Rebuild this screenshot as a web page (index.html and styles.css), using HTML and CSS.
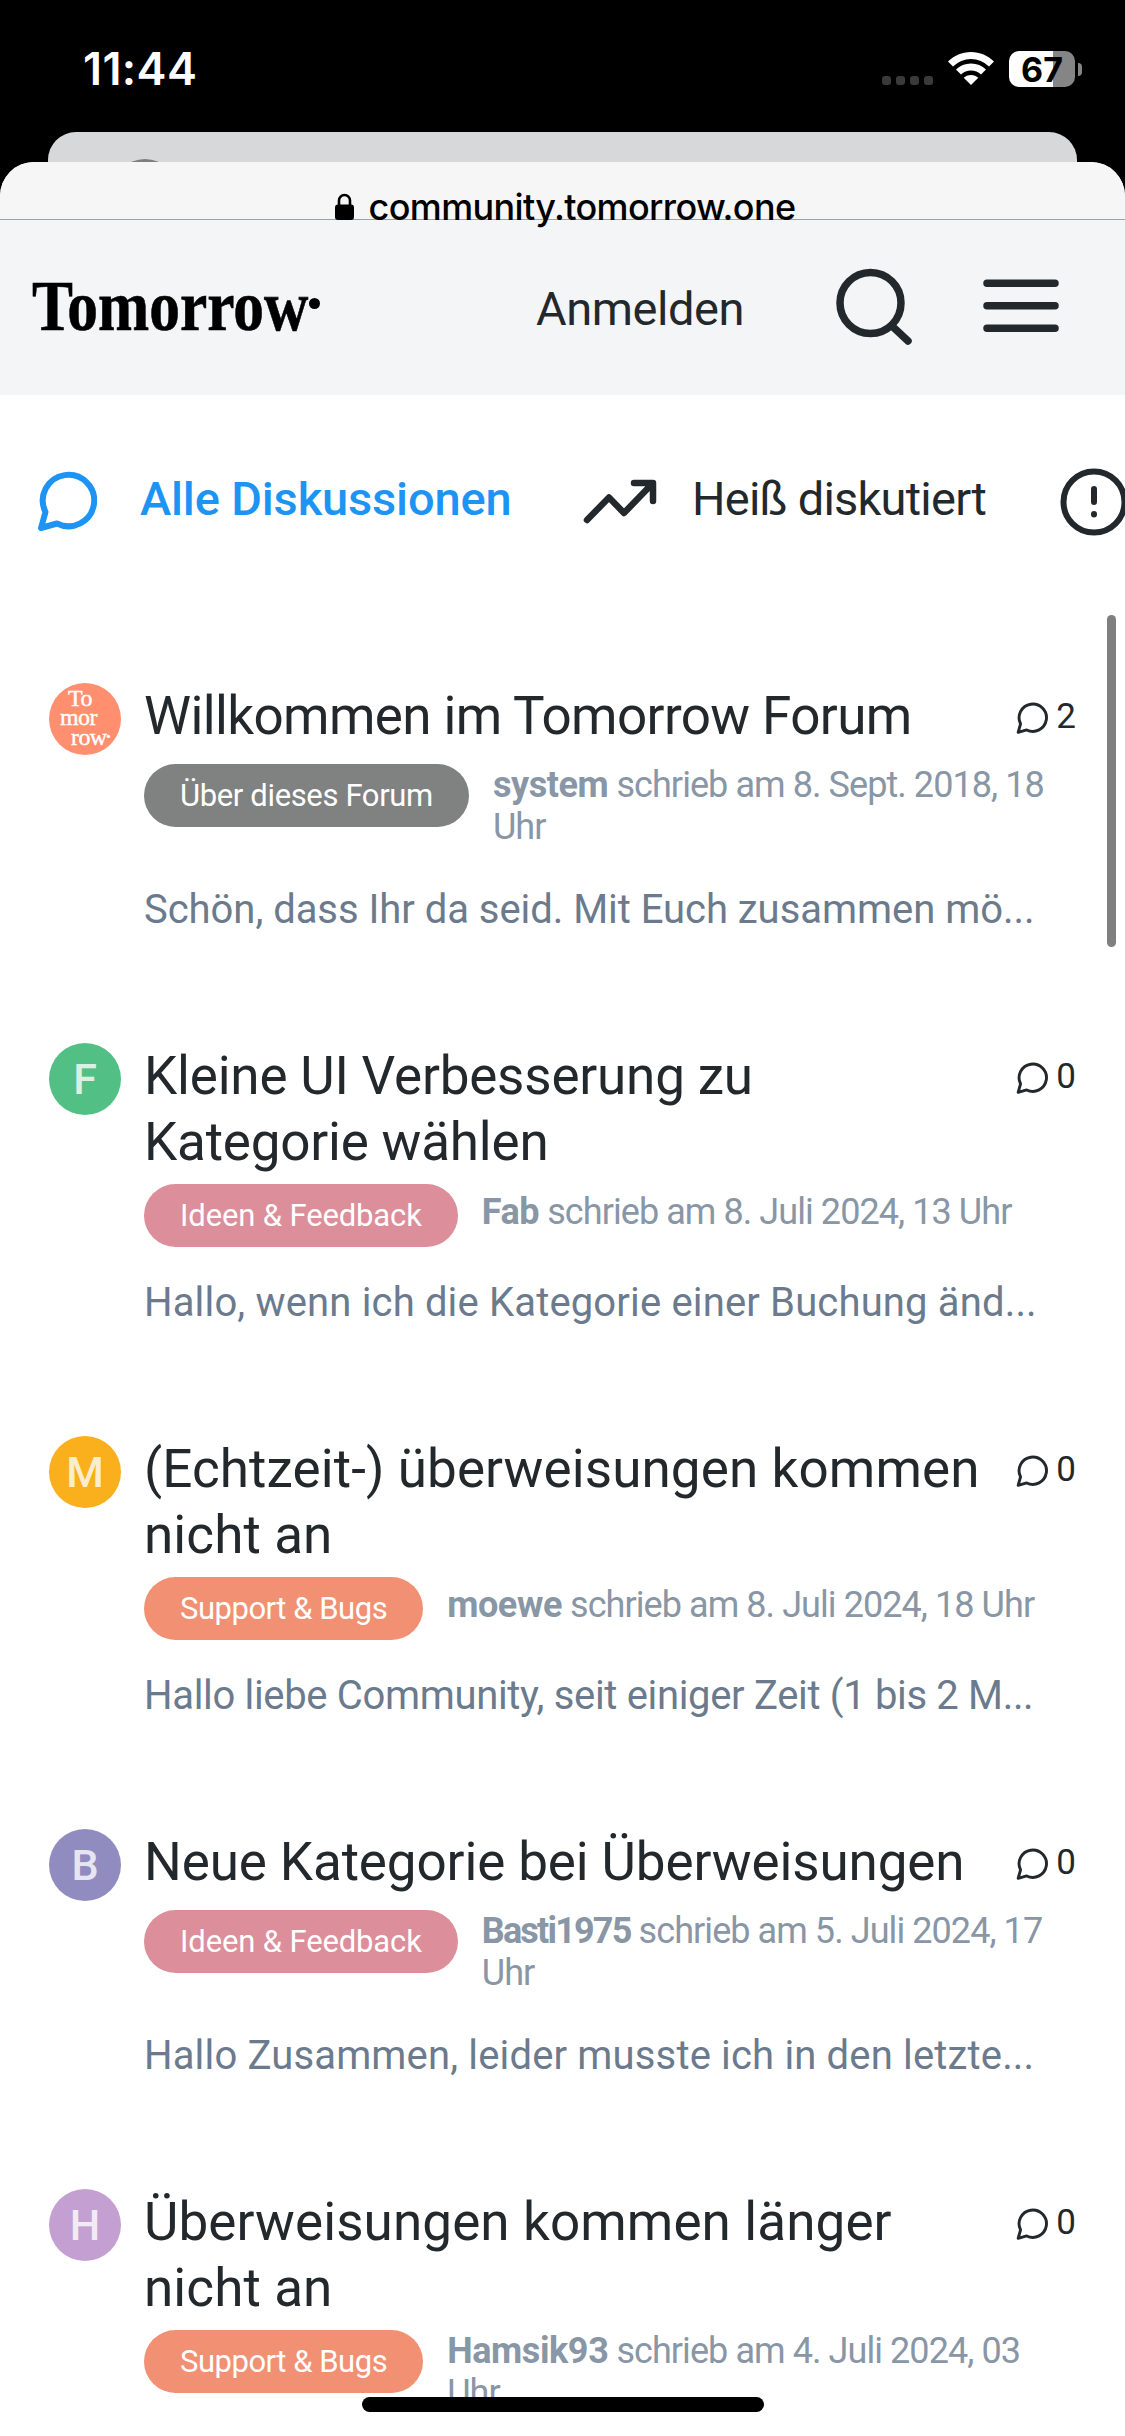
FILE: index.html
```html
<!DOCTYPE html>
<html lang="de">
<head>
<meta charset="utf-8">
<title>Tomorrow Community</title>
<link rel="stylesheet" href="styles.css">
</head>
<body>
<svg class="defs" aria-hidden="true">
  <symbol id="bubble" viewBox="0 0 60 62">
    <path d="M8.5 41A25.7 25.7 0 1 1 20 52.5L4 57Z"/>
  </symbol>
</svg>
<div class="screen">
  <div class="statusbar">
    <span class="clock">11:44</span>
    <div class="status-icons">
      <div class="dots"><i></i><i></i><i></i><i></i></div>
      <svg class="wifi" viewBox="0 0 46 33"><path d="M23 0C14 0 6 3.6 0 9.5L5 14.500A25.500 25.500 0 0 1 41 14.500L46 9.500C40 3.600 32 0 23 0Z"/><path d="M23 11.500C17 11.500 12 13.800 8 17.600L13 22.600A14.300 14.300 0 0 1 33 22.600L38 17.600C34 13.800 29 11.500 23 11.500Z"/><path d="M23 23C20 23 17.500 24.100 15.700 25.800L23 33L30.300 25.800C28.500 24.100 26 23 23 23Z"/></svg>
      <div class="battery">67</div>
      <i class="battery-cap"></i>
    </div>
  </div>
  <div class="back-sheet"><i></i></div>
  <main class="sheet">
    <div class="address">
      <svg class="lock" viewBox="0 0 19 27"><path d="M4 13V7.500a5.500 5.500 0 0 1 11 0V13" fill="none" stroke="#000" stroke-width="2.600"/><rect y="11.500" width="19" height="15.500" rx="3"/></svg>
      <span>community.tomorrow.one</span>
    </div>
    <header class="header">
      <div class="logo"><span>Tomorrow</span><i></i></div>
      <a class="login">Anmelden</a>
      <svg class="search" viewBox="0 0 78 78"><circle cx="35.500" cy="36" r="30.500"/><path d="M57 59L73 74"/></svg>
      <svg class="burger" viewBox="0 0 76 54"><path d="M4 4.300H72M4 26.800H72M4 49.300H72"/></svg>
    </header>
    <nav class="tabs">
      <svg class="tab-bubble"><use href="#bubble"/></svg>
      <span class="tab-active">Alle Diskussionen</span>
      <svg class="trend" viewBox="0 0 74 46"><path d="M4 41L26 18.500L41 34L69 5M51 4H70V22"/></svg>
      <span class="tab">Heiß diskutiert</span>
      <svg class="alert" viewBox="0 0 68 68"><circle cx="34" cy="34" r="30.500"/><path d="M34 21V34M34 46V46.500"/></svg>
    </nav>
    <section class="topics">
      <article class="topic long">
        <div class="avatar brand"><span>To</span><span>mor</span><span>row<b>•</b></span></div>
        <div class="body">
          <div class="top"><h2 class="tight">Willkommen im Tomorrow Forum</h2><div class="count"><svg><use href="#bubble"/></svg>2</div></div>
          <div class="info"><span class="badge about">Über dieses Forum</span><p class="meta"><b>system</b> schrieb am 8. Sept. 2018, 18 Uhr</p></div>
          <p class="excerpt">Schön, dass Ihr da seid. Mit Euch zusammen mö...</p>
        </div>
      </article>
      <article class="topic">
        <div class="avatar green">F</div>
        <div class="body">
          <div class="top"><h2>Kleine UI Verbesserung zu Kategorie wählen</h2><div class="count"><svg><use href="#bubble"/></svg>0</div></div>
          <div class="info"><span class="badge ideas">Ideen &amp; Feedback</span><p class="meta"><b>Fab</b> schrieb am 8. Juli 2024, 13 Uhr</p></div>
          <p class="excerpt loose">Hallo, wenn ich die Kategorie einer Buchung änd...</p>
        </div>
      </article>
      <article class="topic">
        <div class="avatar yellow">M</div>
        <div class="body">
          <div class="top"><h2 class="loose">(Echtzeit-) überweisungen kommen nicht an</h2><div class="count"><svg><use href="#bubble"/></svg>0</div></div>
          <div class="info"><span class="badge support">Support &amp; Bugs</span><p class="meta"><b>moewe</b> schrieb am 8. Juli 2024, 18 Uhr</p></div>
          <p class="excerpt tight">Hallo liebe Community, seit einiger Zeit (1 bis 2 M...</p>
        </div>
      </article>
      <article class="topic long">
        <div class="avatar indigo">B</div>
        <div class="body">
          <div class="top"><h2 class="medium">Neue Kategorie bei Überweisungen</h2><div class="count"><svg><use href="#bubble"/></svg>0</div></div>
          <div class="info"><span class="badge ideas">Ideen &amp; Feedback</span><p class="meta"><b class="narrow">Basti1975</b> schrieb am 5. Juli 2024, 17 Uhr</p></div>
          <p class="excerpt loose">Hallo Zusammen, leider musste ich in den letzte...</p>
        </div>
      </article>
      <article class="topic long wrapped">
        <div class="avatar lilac">H</div>
        <div class="body">
          <div class="top"><h2 class="loose">Überweisungen kommen länger nicht an</h2><div class="count"><svg><use href="#bubble"/></svg>0</div></div>
          <div class="info"><span class="badge support">Support &amp; Bugs</span><p class="meta"><b>Hamsik93</b> schrieb am 4. Juli 2024, 03 Uhr</p></div>
        </div>
      </article>
    </section>
  </main>
  <i class="scrollbar"></i>
  <div class="home-area"><i></i></div>
</div>
</body>
</html>
```
FILE: styles.css
```css
* { box-sizing: border-box; }
body { margin: 0; background: #000; }
h2, p { margin: 0; font-weight: 400; }
i { display: block; }
.defs { display: none; }
.screen {
  position: relative;
  width: 1125px;
  height: 2436px;
  overflow: hidden;
  background: #000;
  color: #23282c;
  font-family: Roboto, sans-serif;
}

/* Status bar */
.statusbar {
  height: 132px;
  padding: 0 43px 0 83px;
  display: flex;
  justify-content: space-between;
  align-items: flex-start;
  color: #fff;
  font-family: Inter, sans-serif;
}
.clock { margin-top: 39px; font-size: 45px; line-height: 60px; font-weight: 600; letter-spacing: .4px; }
.status-icons { display: flex; margin-top: 51px; }
.dots { display: flex; gap: 5px; margin-top: 25px; }
.dots i { width: 9px; height: 9px; border-radius: 3px; background: #3a3a3a; }
.wifi { width: 46px; height: 33px; margin: 1px 15px 0; fill: #fff; }
.battery {
  width: 66px;
  height: 36px;
  border-radius: 10px;
  background: linear-gradient(90deg, #fff 44px, #858585 44px);
  color: #000;
  font-size: 34px;
  line-height: 37px;
  font-weight: 700;
  text-align: center;
}
.battery-cap { width: 4px; height: 13px; margin: 12px 0 0 3px; border-radius: 0 4px 4px 0; background: #858585; }

/* Stacked sheets */
.back-sheet {
  height: 30px;
  margin: 0 48px;
  border-radius: 28px 28px 0 0;
  background: #d7d8da;
  overflow: hidden;
}
.back-sheet i { width: 66px; height: 66px; margin: 27px 0 0 64px; border-radius: 50%; background: #7d7e80; }
.sheet { height: 2274px; border-radius: 34px 34px 0 0; background: #fff; overflow: hidden; }
.address {
  position: relative;
  height: 58px;
  padding: 22px 0 0 3px;
  display: flex;
  justify-content: center;
  background: #f6f6f7;
  border-bottom: 1px solid #9fa0a1;
  color: #000;
  font: 500 36px/46px Inter, sans-serif;
  letter-spacing: -0.63px;
}
.address span { height: 46px; }
.lock { width: 19px; height: 27px; margin: 9px 15px 0 2px; flex: none; }

/* Header */
.header { height: 175px; padding-left: 32px; display: flex; align-items: flex-start; background: #f3f5f7; }
.logo { width: 504px; display: flex; color: #000; font: 700 71px/80px "Liberation Serif", serif; }
.logo span { width: 277px; margin-top: 46px; transform: scaleX(.865); transform-origin: 0 0; -webkit-text-stroke: .6px #000; }
.logo i { width: 11px; height: 11px; margin-top: 78px; border-radius: 50%; background: #000; }
.login { width: 298px; margin-top: 59px; font-size: 47px; line-height: 60px; letter-spacing: -0.45px; }
.search, .burger, .trend, .alert, .tab-bubble, .count svg { fill: none; stroke: currentColor; stroke-linecap: round; stroke-linejoin: round; flex: none; }
.search { width: 78px; height: 78px; margin: 47px 69px 0 1px; stroke-width: 7.5; }
.burger { width: 76px; height: 54px; margin: 59px 0 0 1px; stroke-width: 7.5; }

/* Tabs */
.tabs { height: 288px; padding: 71px 0 0 37px; display: flex; font-size: 47px; line-height: 66px; white-space: nowrap; }
.tabs span { flex: none; }
.tab-bubble { width: 60px; height: 62px; margin-top: 5px; color: #1d94f3; stroke-width: 6; }
.tab-active { width: 442px; margin-left: 43px; color: #1d94f3; font-weight: 500; letter-spacing: -0.15px; }
.trend { width: 74px; height: 46px; margin: 13px 0 0 1px; stroke-width: 6.5; }
.tab { width: 367px; margin-left: 35px; letter-spacing: -0.77px; }
.alert { width: 68px; height: 68px; margin: 2px 0 0 1px; stroke-width: 6; }

/* Topic list */
.topic { display: flex; gap: 23px; padding: 0 49px; margin-bottom: 104px; }
.avatar {
  width: 72px;
  height: 72px;
  flex: none;
  border-radius: 50%;
  color: rgba(255, 255, 255, .8);
  font-size: 43px;
  line-height: 73px;
  text-align: center;
  font-weight: 500;
}
.green { background: #52c084; }
.yellow { background: #f9b01c; }
.indigo { background: #918cbf; }
.lilac { background: #c4a0d2; }
.brand {
  display: flex;
  flex-direction: column;
  padding-top: 6px;
  background: #ff8f6e;
  color: #fff;
  font: 400 24px/19px "Liberation Serif", serif;
  text-align: left;
}
.brand span { letter-spacing: -0.6px; -webkit-text-stroke: .4px #fff; }
.brand span:nth-child(1) { padding-left: 19px; }
.brand span:nth-child(2) { padding-left: 11px; }
.brand span:nth-child(3) { padding-left: 22px; white-space: nowrap; }
.brand b { font-size: 11px; vertical-align: 5px; }
.body { width: 932px; flex: none; }
.top { display: flex; justify-content: space-between; }
h2 { width: 838px; font-size: 53px; line-height: 66px; letter-spacing: -0.2px; }
h2.tight { letter-spacing: -0.62px; }
h2.medium { letter-spacing: -0.12px; }
h2.loose { letter-spacing: 0.1px; }
.count { display: flex; height: 66px; font-size: 35px; line-height: 67px; gap: 8px; }
.count svg { width: 32px; height: 33px; margin-top: 19px; stroke-width: 5.5; }
.info { display: flex; height: 97px; padding-top: 9px; align-items: flex-start; gap: 24px; }
.long .info { height: 130px; padding-top: 15px; }
.wrapped .info { padding-top: 9px; }
.badge {
  height: 63px;
  padding: 0 36px;
  flex: none;
  border-radius: 32px;
  color: #fff;
  font-size: 31px;
  line-height: 63px;
  letter-spacing: -0.36px;
}
.about { background: #7f8281; }
.ideas { background: #dc8e9a; letter-spacing: -0.14px; }
.support { background: #f19073; letter-spacing: -0.48px; }
.meta { margin: 7px 12px 0 0; color: #8896a5; font-size: 36px; line-height: 42px; letter-spacing: -0.93px; }
.long .meta { margin-top: 0; }
.meta b { letter-spacing: -0.4px; }
.meta b.narrow { letter-spacing: -1.8px; }
.excerpt { height: 60px; color: #6b7a8c; font-size: 40px; line-height: 61px; white-space: nowrap; letter-spacing: -0.04px; }
.excerpt.loose { letter-spacing: 0.16px; }
.excerpt.tight { letter-spacing: -0.33px; }

/* Overlays */
.scrollbar { position: absolute; left: 1107px; top: 615px; width: 9px; height: 332px; border-radius: 5px; background: #7f7f7f; }
.home-area { position: absolute; left: 0; right: 0; bottom: 0; height: 39px; background: #fff; }
.home-area i { width: 402px; height: 15px; margin: 0 auto; border-radius: 8px; background: #000; }
```
